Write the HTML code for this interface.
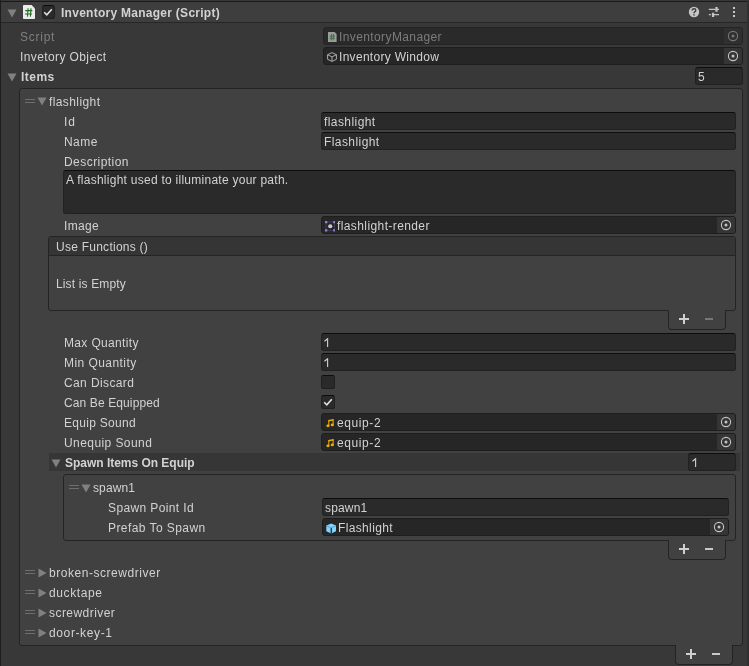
<!DOCTYPE html>
<html><head><meta charset="utf-8"><style>
html,body{margin:0;padding:0}
body{width:749px;height:666px;overflow:hidden;position:relative;background:#383838;font-family:"Liberation Sans",sans-serif;font-size:12px;color:#d2d2d2}
.a{position:absolute}
.t{position:absolute;line-height:16px;white-space:nowrap;font-variant-ligatures:none;letter-spacing:0.5px;word-spacing:-1.4px}
.b{font-weight:bold;letter-spacing:0.28px}
.f{position:absolute;box-sizing:border-box;background:#2a2a2a;border:1px solid #212121;border-top-color:#0d0d0d;border-radius:3px}

.of{background:#262626;border-color:#1e1e1e;border-top-color:#1e1e1e}
.pk{position:absolute;top:0;right:0;width:18px;height:16px;background:#353535;border-radius:0 2px 2px 0}
.box{position:absolute;box-sizing:border-box;background:#414141;border:1px solid #242424;border-radius:3px}
.foot{position:absolute;box-sizing:border-box;background:#414141;border:1px solid #242424;border-top:none;border-radius:0 0 4px 4px}
</style></head><body><div class="a" style="left:0;top:0;width:749px;height:666px;will-change:transform;background:#383838">
<div class="a" style="left:0;top:1px;width:747px;height:1px;background:#1a1a1a"></div>
<div class="a" style="left:0;top:2px;width:747px;height:20px;background:#3e3e3e"></div>
<div class="a" style="left:0;top:22px;width:747px;height:1px;background:#262626"></div>
<div class="a" style="left:747px;top:0;width:2px;height:666px;background:#303030"></div>
<svg class="a" style="left:6.5px;top:9px" width="10" height="9" viewBox="0 0 10 9"><path d="M0.5 0.5 H9.5 L5 8.5 Z" fill="#808080"/></svg>

<svg class="a" style="left:23px;top:5px" width="12" height="14" viewBox="0 0 12 14"><path d="M0 0.8 Q0 0 0.8 0 H8.6 L12 3.4 V13.2 Q12 14 11.2 14 H0.8 Q0 14 0 13.2 Z" fill="#ececec"/><path d="M5.1 3.2 L4.5 11.6 M8 3.2 L7.4 11.6 M2.3 5.6 H9.3 M2 8.9 H9" stroke="#1e6e1e" stroke-width="1.05" fill="none"/></svg>
<div class="a" style="left:42px;top:5px;width:13px;height:14px;box-sizing:border-box;background:#2a2a2a;border:1px solid #202020;border-top-color:#0d0d0d;border-radius:3px"></div>
<svg class="a" style="left:40.7px;top:5px" width="14" height="14" viewBox="0 0 14 14"><path d="M3.2 7.2 L5.8 9.8 L10.8 4.2" stroke="#e0e0e0" stroke-width="1.6" fill="none"/></svg>
<div class="t b" style="left:61px;top:5px;;letter-spacing:0.268px;word-spacing:0px">Inventory Manager (Script)</div>

<svg class="a" style="left:688px;top:6px" width="12" height="12" viewBox="0 0 12 12"><circle cx="6" cy="6" r="5.2" fill="#c4c4c4"/><path d="M4.2 4.6 Q4.2 2.8 6 2.8 Q7.8 2.8 7.8 4.4 Q7.8 5.4 6.6 5.9 Q6 6.2 6 7.2" stroke="#3e3e3e" stroke-width="1.4" fill="none"/><rect x="5.3" y="8.2" width="1.4" height="1.4" fill="#3e3e3e"/></svg>
<svg class="a" style="left:708px;top:6px" width="12" height="12" viewBox="0 0 12 12"><path d="M0.8 2.7h6.3v1.3h-6.3z M7.3 1h2.3v4.8h-2.3z M9.6 2.7h1.4v1.3h-1.4z M0.8 7.9h2.1v1.3h-2.1z M3.9 6.8h2.3v4.3h-2.3z M6.2 7.9h4.8v1.3h-4.8z" fill="#c4c4c4"/></svg>
<div class="a" style="left:733px;top:7px;width:2px;height:2px;background:#c8c8c8;box-shadow:0 4px 0 #c8c8c8,0 8px 0 #c8c8c8"></div>
<div class="t " style="left:20px;top:29px;color:#7f7f7f;letter-spacing:0.740px;word-spacing:0px">Script</div>

<div class="f " style="left:323px;top:27px;width:420px;height:18px;background:#2a2a2a;border-color:#242424;border-top-color:#242424"><svg class="a" style="left:3.6px;top:4px" width="9" height="10" viewBox="0 0 9 10"><path d="M0 0 H6.5 L8.6 2.1 V10 H0 Z" fill="#9c9c9c"/><path d="M3.6 2 L3 8.4 M5.6 2 L5 8.4 M1.8 4.2 H7 M1.6 6.4 H6.8" stroke="#3d6a3d" stroke-width="0.9"/></svg><div class="t " style="left:15px;top:1px;color:#7c7c7c;letter-spacing:0.393px;word-spacing:0px">InventoryManager</div>
<div class="pk" style="background:#303030"><svg width="18" height="16" viewBox="0 0 18 16" style="position:absolute;left:0;top:0"><circle cx="9" cy="8" r="4.6" fill="none" stroke="#777" stroke-width="1.1"/><circle cx="9" cy="8" r="1.5" fill="#777"/></svg></div></div>

<div class="t " style="left:20px;top:49px;;letter-spacing:0.393px;word-spacing:0px">Invetory Object</div>

<div class="f of" style="left:323px;top:47px;width:420px;height:18px;"><svg class="a" style="left:2.8px;top:4.2px" width="10" height="10" viewBox="0 0 10 10"><path d="M5 0.6 L9.4 2.7 V7.3 L5 9.4 L0.6 7.3 V2.7 Z M0.6 2.7 L5 4.9 L9.4 2.7 M5 4.9 V9.4" stroke="#ababab" stroke-width="1" stroke-linejoin="round" fill="none"/></svg><div class="t " style="left:15px;top:1px;;letter-spacing:0.300px;word-spacing:0px">Inventory Window</div>
<div class="pk"><svg width="18" height="16" viewBox="0 0 18 16" style="position:absolute;left:0;top:0"><circle cx="9" cy="8" r="4.6" fill="none" stroke="#c4c4c4" stroke-width="1.1"/><circle cx="9" cy="8" r="1.5" fill="#c4c4c4"/></svg></div></div>

<svg class="a" style="left:6.5px;top:73px" width="10" height="9" viewBox="0 0 10 9"><path d="M0.5 0.5 H9.5 L5 8.5 Z" fill="#808080"/></svg>

<div class="t b" style="left:21px;top:69px;;letter-spacing:0.475px;word-spacing:0px">Items</div>

<div class="f " style="left:695px;top:67px;width:48px;height:18px;"><div class="t " style="left:2px;top:1px;">5</div>
</div>

<div class="box" style="left:19px;top:88px;width:724px;height:558px"></div>
<div class="foot" style="left:675px;top:645px;width:58px;height:20px"></div>
<div class="a" style="left:686px;top:653px;width:10px;height:2px;background:#d0d0d0"></div><div class="a" style="left:690px;top:649px;width:2px;height:10px;background:#d0d0d0"></div><div class="a" style="left:712px;top:653px;width:8px;height:2px;background:#c8c8c8"></div>

<div class="a" style="left:25px;top:99px;width:10px;height:1px;background:#6e6e6e"></div><div class="a" style="left:25px;top:102px;width:10px;height:1px;background:#6e6e6e"></div>

<svg class="a" style="left:37px;top:97px" width="10" height="9" viewBox="0 0 10 9"><path d="M0.5 0.5 H9.5 L5 8.5 Z" fill="#808080"/></svg>

<div class="t " style="left:49px;top:94px;;letter-spacing:0.400px;word-spacing:0px">flashlight</div>

<div class="t " style="left:64px;top:114px;;letter-spacing:0.900px;word-spacing:0px">Id</div>

<div class="f " style="left:321px;top:112px;width:415px;height:18px;"><div class="t " style="left:2px;top:1px;;letter-spacing:0.422px;word-spacing:0px">flashlight</div>
</div>

<div class="t " style="left:64px;top:134px;;letter-spacing:0.433px;word-spacing:0px">Name</div>

<div class="f " style="left:321px;top:132px;width:415px;height:18px;"><div class="t " style="left:2px;top:1px;;letter-spacing:0.422px;word-spacing:0px">Flashlight</div>
</div>

<div class="t " style="left:64px;top:154px;;letter-spacing:0.450px;word-spacing:0px">Description</div>

<div class="f " style="left:63px;top:170px;width:673px;height:44px;"><div class="t " style="left:2px;top:1px;;letter-spacing:0.261px;word-spacing:0px">A flashlight used to illuminate your path.</div>
</div>

<div class="t " style="left:64px;top:218px;;letter-spacing:0.350px;word-spacing:0px">Image</div>

<div class="f of" style="left:321px;top:216px;width:415px;height:18px;"><svg class="a" style="left:2.8px;top:4px" width="10.5" height="10.5" viewBox="0 0 10.5 10.5"><rect x="1" y="1" width="8.5" height="8.5" stroke="#3f3a5c" stroke-width="1" fill="none"/><path d="M0 0h2.3v2.3h-2.3z M8.2 0h2.3v2.3h-2.3z M0 8.2h2.3v2.3h-2.3z M8.2 8.2h2.3v2.3h-2.3z" fill="#9a7ed6"/><circle cx="5.25" cy="5.25" r="2.1" fill="#c8c8c8"/></svg><div class="t " style="left:15px;top:1px;;letter-spacing:0.400px;word-spacing:0px">flashlight-render</div>
<div class="pk"><svg width="18" height="16" viewBox="0 0 18 16" style="position:absolute;left:0;top:0"><circle cx="9" cy="8" r="4.6" fill="none" stroke="#c4c4c4" stroke-width="1.1"/><circle cx="9" cy="8" r="1.5" fill="#c4c4c4"/></svg></div></div>

<div class="box" style="left:48px;top:236px;width:688px;height:75px"></div>
<div class="a" style="left:49px;top:237px;width:686px;height:18px;background:#353535;border-bottom:1px solid #242424;border-radius:3px 3px 0 0"></div>
<div class="t " style="left:56px;top:239px;;letter-spacing:0.253px;word-spacing:0px">Use Functions ()</div>

<div class="t " style="left:56px;top:276px;;letter-spacing:0.142px;word-spacing:0px">List is Empty</div>

<div class="foot" style="left:668px;top:310px;width:58px;height:20px"></div>
<div class="a" style="left:679px;top:318px;width:10px;height:2px;background:#d0d0d0"></div><div class="a" style="left:683px;top:314px;width:2px;height:10px;background:#d0d0d0"></div><div class="a" style="left:705px;top:318px;width:8px;height:2px;background:#777777"></div>

<div class="t " style="left:64px;top:335px;;letter-spacing:0.345px;word-spacing:0px">Max Quantity</div>

<div class="f " style="left:321px;top:333px;width:415px;height:18px;"></div>

<svg class="a" style="left:323.8px;top:337.8px" width="5" height="10" viewBox="0 0 5 10"><path d="M0.5 3.3 L3.6 0.7 V9.1" stroke="#cccccc" stroke-width="1.15" fill="none"/></svg>
<div class="t " style="left:64px;top:355px;;letter-spacing:0.445px;word-spacing:0px">Min Quantity</div>

<div class="f " style="left:321px;top:353px;width:415px;height:18px;"></div>

<svg class="a" style="left:323.8px;top:357.8px" width="5" height="10" viewBox="0 0 5 10"><path d="M0.5 3.3 L3.6 0.7 V9.1" stroke="#cccccc" stroke-width="1.15" fill="none"/></svg>
<div class="t " style="left:64px;top:375px;;letter-spacing:0.390px;word-spacing:0px">Can Discard</div>

<div class="a" style="left:321px;top:375px;width:14px;height:14px;box-sizing:border-box;background:#2a2a2a;border:1px solid #202020;border-top-color:#0d0d0d;border-radius:2.5px"></div>
<div class="t " style="left:64px;top:395px;;letter-spacing:0.114px;word-spacing:0px">Can Be Equipped</div>

<div class="a" style="left:321px;top:395px;width:14px;height:14px;box-sizing:border-box;background:#2a2a2a;border:1px solid #202020;border-top-color:#0d0d0d;border-radius:2.5px"></div>
<svg class="a" style="left:321px;top:395px" width="14" height="14" viewBox="0 0 14 14"><path d="M3.2 7.2 L5.8 9.8 L10.8 4.2" stroke="#e0e0e0" stroke-width="1.6" fill="none"/></svg>
<div class="t " style="left:64px;top:415px;;letter-spacing:0.290px;word-spacing:0px">Equip Sound</div>

<div class="f of" style="left:321px;top:413px;width:415px;height:18px;"><svg class="a" style="left:3.5px;top:3.5px" width="9" height="10" viewBox="0 0 10 11"><path d="M2.6 2.2 L8.4 1 V2.7 L2.6 3.9 Z" fill="#f0b000"/><path d="M3.1 2.5 V8.4 M7.9 1.5 V7.4" stroke="#f0b000" stroke-width="1.1" fill="none"/><ellipse cx="2.2" cy="8.6" rx="1.8" ry="1.5" fill="#f0b000"/><ellipse cx="7" cy="7.6" rx="1.8" ry="1.5" fill="#f0b000"/></svg><div class="t " style="left:15px;top:1px;;letter-spacing:0.600px;word-spacing:0px">equip-2</div>
<div class="pk"><svg width="18" height="16" viewBox="0 0 18 16" style="position:absolute;left:0;top:0"><circle cx="9" cy="8" r="4.6" fill="none" stroke="#c4c4c4" stroke-width="1.1"/><circle cx="9" cy="8" r="1.5" fill="#c4c4c4"/></svg></div></div>

<div class="t " style="left:64px;top:435px;;letter-spacing:0.425px;word-spacing:0px">Unequip Sound</div>

<div class="f of" style="left:321px;top:433px;width:415px;height:18px;"><svg class="a" style="left:3.5px;top:3.5px" width="9" height="10" viewBox="0 0 10 11"><path d="M2.6 2.2 L8.4 1 V2.7 L2.6 3.9 Z" fill="#f0b000"/><path d="M3.1 2.5 V8.4 M7.9 1.5 V7.4" stroke="#f0b000" stroke-width="1.1" fill="none"/><ellipse cx="2.2" cy="8.6" rx="1.8" ry="1.5" fill="#f0b000"/><ellipse cx="7" cy="7.6" rx="1.8" ry="1.5" fill="#f0b000"/></svg><div class="t " style="left:15px;top:1px;;letter-spacing:0.600px;word-spacing:0px">equip-2</div>
<div class="pk"><svg width="18" height="16" viewBox="0 0 18 16" style="position:absolute;left:0;top:0"><circle cx="9" cy="8" r="4.6" fill="none" stroke="#c4c4c4" stroke-width="1.1"/><circle cx="9" cy="8" r="1.5" fill="#c4c4c4"/></svg></div></div>

<div class="a" style="left:49px;top:453px;width:691px;height:18px;background:#363636"></div>
<svg class="a" style="left:51px;top:459px" width="10" height="9" viewBox="0 0 10 9"><path d="M0.5 0.5 H9.5 L5 8.5 Z" fill="#808080"/></svg>

<div class="t b" style="left:65px;top:455px;;letter-spacing:-0.021px;word-spacing:0px">Spawn Items On Equip</div>

<div class="f " style="left:688px;top:453px;width:48px;height:18px;"></div>

<svg class="a" style="left:691.6px;top:458px" width="5" height="10" viewBox="0 0 5 10"><path d="M0.5 3.3 L3.6 0.7 V9.1" stroke="#cccccc" stroke-width="1.15" fill="none"/></svg>
<div class="box" style="left:63px;top:474px;width:673px;height:67px"></div>
<div class="foot" style="left:668px;top:540px;width:58px;height:20px"></div>
<div class="a" style="left:679px;top:548px;width:10px;height:2px;background:#d0d0d0"></div><div class="a" style="left:683px;top:544px;width:2px;height:10px;background:#d0d0d0"></div><div class="a" style="left:705px;top:548px;width:8px;height:2px;background:#c8c8c8"></div>

<div class="a" style="left:69px;top:485px;width:10px;height:1px;background:#6e6e6e"></div><div class="a" style="left:69px;top:488px;width:10px;height:1px;background:#6e6e6e"></div>

<svg class="a" style="left:81px;top:484px" width="10" height="9" viewBox="0 0 10 9"><path d="M0.5 0.5 H9.5 L5 8.5 Z" fill="#808080"/></svg>

<div class="t " style="left:93px;top:480px;;letter-spacing:0.120px;word-spacing:0px">spawn1</div>

<div class="t " style="left:108px;top:500px;;letter-spacing:0.377px;word-spacing:0px">Spawn Point Id</div>

<div class="f " style="left:322px;top:498px;width:407px;height:18px;"><div class="t " style="left:2px;top:1px;;letter-spacing:0.160px;word-spacing:0px">spawn1</div>
</div>

<div class="t " style="left:108px;top:520px;;letter-spacing:0.429px;word-spacing:0px">Prefab To Spawn</div>

<div class="f of" style="left:322px;top:518px;width:407px;height:18px;"><svg class="a" style="left:2.7px;top:3.5px" width="10.5" height="11" viewBox="0 0 10.5 11"><path d="M5.25 0.4 L10.2 2.6 V8.2 L5.25 10.6 L0.3 8.2 V2.6 Z" fill="#80d4ff"/><path d="M0.6 2.8 L5.25 4.9 L9.9 2.8" stroke="#4a90b8" stroke-width="0.8" fill="none"/><path d="M5.25 4.9 V10.6" stroke="#262626" stroke-width="1.3"/></svg><div class="t " style="left:15px;top:1px;;letter-spacing:0.356px;word-spacing:0px">Flashlight</div>
<div class="pk"><svg width="18" height="16" viewBox="0 0 18 16" style="position:absolute;left:0;top:0"><circle cx="9" cy="8" r="4.6" fill="none" stroke="#c4c4c4" stroke-width="1.1"/><circle cx="9" cy="8" r="1.5" fill="#c4c4c4"/></svg></div></div>

<div class="a" style="left:25px;top:570px;width:10px;height:1px;background:#6e6e6e"></div><div class="a" style="left:25px;top:573px;width:10px;height:1px;background:#6e6e6e"></div>

<svg class="a" style="left:38px;top:567.6px" width="9" height="10" viewBox="0 0 9 10"><path d="M0.5 0.5 V9.5 L8.5 5 Z" fill="#808080"/></svg>

<div class="t " style="left:49px;top:565px;;letter-spacing:0.541px;word-spacing:0px">broken-screwdriver</div>

<div class="a" style="left:25px;top:590px;width:10px;height:1px;background:#6e6e6e"></div><div class="a" style="left:25px;top:593px;width:10px;height:1px;background:#6e6e6e"></div>

<svg class="a" style="left:38px;top:587.6px" width="9" height="10" viewBox="0 0 9 10"><path d="M0.5 0.5 V9.5 L8.5 5 Z" fill="#808080"/></svg>

<div class="t " style="left:49px;top:585px;;letter-spacing:0.600px;word-spacing:0px">ducktape</div>

<div class="a" style="left:25px;top:610px;width:10px;height:1px;background:#6e6e6e"></div><div class="a" style="left:25px;top:613px;width:10px;height:1px;background:#6e6e6e"></div>

<svg class="a" style="left:38px;top:607.6px" width="9" height="10" viewBox="0 0 9 10"><path d="M0.5 0.5 V9.5 L8.5 5 Z" fill="#808080"/></svg>

<div class="t " style="left:49px;top:605px;;letter-spacing:0.450px;word-spacing:0px">screwdriver</div>

<div class="a" style="left:25px;top:630px;width:10px;height:1px;background:#6e6e6e"></div><div class="a" style="left:25px;top:633px;width:10px;height:1px;background:#6e6e6e"></div>

<svg class="a" style="left:38px;top:627.6px" width="9" height="10" viewBox="0 0 9 10"><path d="M0.5 0.5 V9.5 L8.5 5 Z" fill="#808080"/></svg>

<div class="t " style="left:49px;top:625px;;letter-spacing:0.622px;word-spacing:0px">door-key-1</div>

<div class="a" style="left:0;top:0;width:1px;height:666px;background:#1e1e1e"></div>
</div></body></html>
